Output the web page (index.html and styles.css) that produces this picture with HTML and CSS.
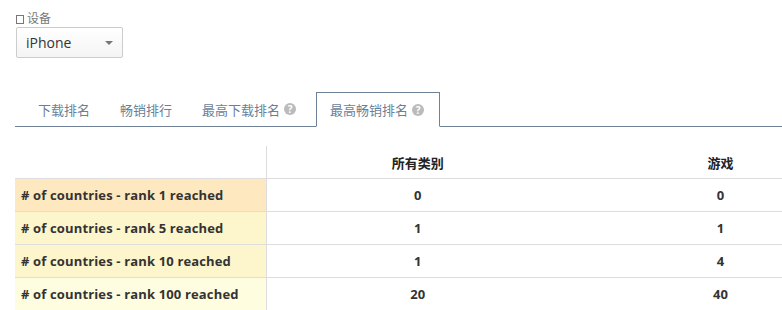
FILE: index.html
```html
<!DOCTYPE html>
<html>
<head>
<meta charset="utf-8">
<link rel="stylesheet" href="styles.css">
</head>
<body>
<div class="page">
  <div class="field">
    <label class="field-label"><span class="box"></span>设备</label>
    <div class="select"><span>iPhone</span><span class="caret"></span></div>
  </div>
  <ul class="tabs">
    <li class="tab">下载排名</li>
    <li class="tab">畅销排行</li>
    <li class="tab">最高下载排名 <span class="help">?</span></li>
    <li class="tab active">最高畅销排名 <span class="help">?</span></li>
  </ul>
  <div class="table-wrap">
    <table class="grid">
      <thead>
        <tr><th class="rowhead"></th><th>所有类别</th><th>游戏</th></tr>
      </thead>
      <tbody>
        <tr class="r1"><td class="rowhead">#&nbsp;of countries - rank 1 reached</td><td>0</td><td>0</td></tr>
        <tr class="r2"><td class="rowhead">#&nbsp;of countries - rank 5 reached</td><td>1</td><td>1</td></tr>
        <tr class="r3"><td class="rowhead">#&nbsp;of countries - rank 10 reached</td><td>1</td><td>4</td></tr>
        <tr class="r4"><td class="rowhead">#&nbsp;of countries - rank 100 reached</td><td>20</td><td>40</td></tr>
      </tbody>
    </table>
  </div>
</div>
</body>
</html>
```
FILE: styles.css
```css
html, body { margin: 0; padding: 0; background: #fff; overflow: hidden; }
body { font-family: "Open Sans", "Noto Sans CJK SC", sans-serif; color: #333; }
.page { padding: 12px 0 0 15px; }
.field-label { display: flex; align-items: center; gap: 3px; font-size: 12px; color: #777; line-height: 14px; }
.box { width: 6px; height: 7px; border: 1px solid #777; display: inline-block; margin-left: 1px; }
.select { margin: 1px 0 0 1px; width: 107px; height: 31px; box-sizing: border-box; border: 1px solid #ccc; border-radius: 2px; background: linear-gradient(#fff, #f4f4f4); display: flex; align-items: center; justify-content: space-between; padding: 0 9px 0 9px; font-size: 14px; color: #333; }
.caret { width: 0; height: 0; border-left: 4px solid transparent; border-right: 4px solid transparent; border-top: 4px solid #777; }
.tabs { list-style: none; margin: 34px 0 0 0; padding: 0 0 0 9px; display: flex; border-bottom: 1px solid #6f8196; height: 34px; }
.tab { padding: 0 14px; margin-right: 2px; font-size: 13px; color: #6b7f95; display: flex; align-items: center; gap: 4px; height: 34px; box-sizing: border-box; }
.tab.active { border: 1px solid #6f8196; border-bottom: 1px solid #fff; height: 35px; background: #fff; margin-left: 4px; padding: 0 15px 0 13px; }
.help { display: inline-flex; width: 12px; height: 12px; border-radius: 50%; background: #bbb; color: #fff; font-size: 10px; font-weight: bold; align-items: center; justify-content: center; line-height: 1; }
.table-wrap { margin-top: 19px; overflow: hidden; }
.grid { border-collapse: collapse; width: 857px; table-layout: fixed; font-size: 13px; }
.grid th, .grid td { height: 32px; padding: 0; text-align: center; font-weight: bold; color: #333; border-bottom: 1px solid #ddd; }
.grid th { color: #222; height: 32px; }
.grid td.rowhead { letter-spacing: 0.15px; }
.grid .rowhead { width: 251px; text-align: left; padding-left: 6px; box-sizing: border-box; border-right: 1px solid #ddd; }
.r1 .rowhead { background: #fde8bf; }
.r2 .rowhead, .r3 .rowhead { background: #fdf6cc; }
.r4 .rowhead { background: #fefde0; }
```
